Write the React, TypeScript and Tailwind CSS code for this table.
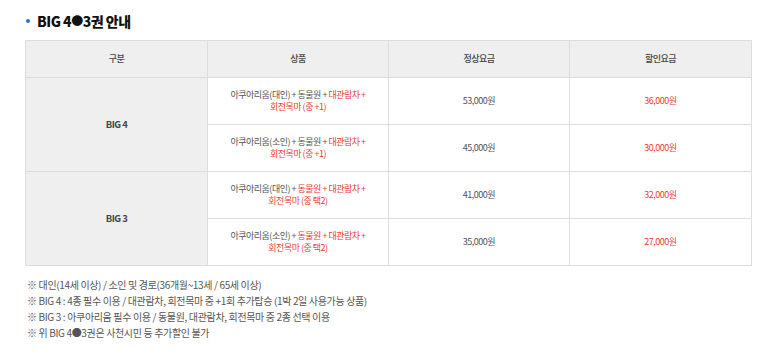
const FONT = "font-['Noto_Sans_CJK_KR','Noto_Sans',sans-serif]";

type Row = {
  product: React.ReactNode;
  normal: string;
  sale: string;
};

const R = ({ children }: { children: React.ReactNode }) => (
  <span className="text-[#ef3b36]">{children}</span>
);

const big4: Row[] = [
  {
    product: (
      <>
        아쿠아리움(대인) + 동물원 + <R>대관람차 +</R>
        <br />
        <R>회전목마 (중 +1)</R>
      </>
    ),
    normal: "53,000원",
    sale: "36,000원",
  },
  {
    product: (
      <>
        아쿠아리움(소인) + 동물원 + <R>대관람차 +</R>
        <br />
        <R>회전목마 (중 +1)</R>
      </>
    ),
    normal: "45,000원",
    sale: "30,000원",
  },
];

const big3: Row[] = [
  {
    product: (
      <>
        아쿠아리움(대인) + <R>동물원 + 대관람차 +</R>
        <br />
        <R>회전목마 (중 택2)</R>
      </>
    ),
    normal: "41,000원",
    sale: "32,000원",
  },
  {
    product: (
      <>
        아쿠아리움(소인) + <R>동물원 + 대관람차 +</R>
        <br />
        <R>회전목마 (중 택2)</R>
      </>
    ),
    normal: "35,000원",
    sale: "27,000원",
  },
];

const cell = "border border-[#dddddd] text-center align-middle p-0";

function Group({ label, rows }: { label: string; rows: Row[] }) {
  return (
    <>
      {rows.map((r, i) => (
        <tr key={i} className="h-[47px]">
          {i === 0 && (
            <td rowSpan={rows.length} className={`${cell} bg-[#efefef] font-semibold text-[#444] text-[9.5px]`}>
              {label}
            </td>
          )}
          <td className={`${cell} leading-[12px]`}>{r.product}</td>
          <td className={cell}>{r.normal}</td>
          <td className={`${cell} text-[#ef3b36]`}>{r.sale}</td>
        </tr>
      ))}
    </>
  );
}

export default function App() {
  return (
    <div className={`${FONT} bg-white w-[773px] h-[356px] pl-[25px] pt-[10px]`}>
      <h2 className="flex items-center h-[22px] text-[14px] font-extrabold text-[#111] tracking-[-0.5px]">
        <span className="w-[4px] h-[4px] rounded-full bg-[#2f6fe0] ml-[1px] mr-[7px]" />
        BIG 4<span className="text-[12px]">●</span>3권 안내
      </h2>
      <table className="mt-[8px] w-[726px] border-collapse table-fixed text-[9px] text-[#555] tracking-[-0.5px]">
        <colgroup>
          <col className="w-[182px]" />
          <col className="w-[181px]" />
          <col className="w-[181px]" />
          <col className="w-[182px]" />
        </colgroup>
        <thead>
          <tr className="h-[37px] bg-[#efefef] text-[#444]">
            <th className={`${cell} font-medium`}>구분</th>
            <th className={`${cell} font-medium`}>상품</th>
            <th className={`${cell} font-medium`}>정상요금</th>
            <th className={`${cell} font-medium`}>할인요금</th>
          </tr>
        </thead>
        <tbody>
          <Group label="BIG 4" rows={big4} />
          <Group label="BIG 3" rows={big3} />
        </tbody>
      </table>
      <ul className="mt-[11px] pl-[2px] text-[10px] leading-[16px] text-[#555] tracking-[-0.35px]">
        <li>※ 대인(14세 이상) / 소인 및 경로(36개월~13세 / 65세 이상)</li>
        <li>※ BIG 4 : 4종 필수 이용 / 대관람차, 회전목마 중 +1회 추가탑승 (1박 2일 사용가능 상품)</li>
        <li>※ BIG 3 : 아쿠아리움 필수 이용 / 동물원, 대관람차, 회전목마 중 2종 선택 이용</li>
        <li>※ 위 BIG 4●3권은 사천시민 등 추가할인 불가</li>
      </ul>
    </div>
  );
}
